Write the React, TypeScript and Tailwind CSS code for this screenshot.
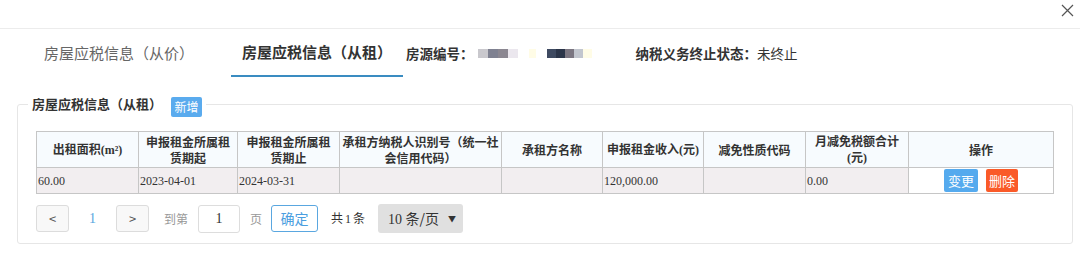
import React from 'react';

const sans = "font-['Noto_Sans_CJK_SC','Noto_Sans',sans-serif]";
const serif = "font-['Liberation_Serif','Noto_Sans_CJK_SC',serif]";

const columns = [
  { w: 102, label: <>出租面积<span className={serif}>(m²)</span></> },
  { w: 99, label: <>申报租金所属租<br />赁期起</> },
  { w: 102, label: <>申报租金所属租<br />赁期止</> },
  { w: 162, label: <>承租方纳税人识别号（统一社<br />会信用代码）</> },
  { w: 101, label: <>承租方名称</> },
  { w: 101, label: <>申报租金收入<span className={serif}>(</span>元<span className={serif}>)</span></> },
  { w: 102, label: <>减免性质代码</> },
  { w: 103, label: <>月减免税额合计<br /><span className={serif}>(</span>元<span className={serif}>)</span></> },
  { w: 145, label: <>操作</> },
];

const row = ['60.00', '2023-04-01', '2024-03-31', '', '', '120,000.00', '', '0.00'];

// blurred house id blocks
const blurA = ['#c9c8cd', '#7f8191', '#8b8791', '#ebe7ee'];
const blurB = ['#3e4a61', '#2b3549', '#7b7681', '#c2c6ce', '#fffce6'];

const CloseIcon: React.FC = () => (
  <svg width="13" height="13" viewBox="0 0 13 13" fill="none" stroke="#555" strokeWidth="1.2">
    <path d="M1 1 L12 12 M12 1 L1 12" />
  </svg>
);

const App: React.FC = () => {
  return (
    <div className={`w-[1080px] h-[270px] bg-white overflow-hidden text-[#333] ${sans}`}>
      <div className="h-[29px] border-b border-[#ececec] flex justify-end pt-[4px] pr-[6px]">
        <CloseIcon />
      </div>

      <div className="h-[48px] flex items-stretch">
        <div className="pl-[44px] flex items-center text-[15px] leading-[20px] text-[#666]">
          房屋应税信息（从价）
        </div>
        <div className="ml-[37px] w-[172px] flex items-center justify-center border-b-2 border-[#3a8cc1] text-[15px] leading-[20px] font-bold text-[#333]">
          房屋应税信息（从租）
        </div>
        <div className="ml-[3px] flex items-center text-[13.5px] leading-[18px]">
          <span className="font-bold">房源编号：</span>
          <div className="ml-[4px] flex h-[9px]">
            {blurA.map((c, i) => (
              <div key={i} className="w-[10px] h-full" style={{ backgroundColor: c }} />
            ))}
          </div>
          <div className="ml-[11px] w-[7px] h-[9px] bg-[#fffce6]" />
          <div className="ml-[11px] flex h-[9px]">
            {blurB.map((c, i) => (
              <div key={i} className="w-[9px] h-full" style={{ backgroundColor: c }} />
            ))}
          </div>
          <span className="ml-[44px] font-bold">纳税义务终止状态：</span>
          <span>未终止</span>
        </div>
      </div>

      <fieldset className="ml-[17px] mt-[14px] w-[1055px] border border-[#e6e6e6] rounded-[3px]">
        <legend className="ml-[10px] px-[4px] h-[26px] flex">
          <span className="self-center text-[13px] leading-[16px] font-bold">房屋应税信息（从租）</span>
          <span className="self-end ml-[9px] h-[20px] w-[31px] bg-[#5aabee] text-white text-[12px] leading-[20px] text-center rounded-[2px]">
            新增
          </span>
        </legend>

        <div className="px-[18px] pb-[10px]">
          <table className="mt-[14px] w-[1017px] table-fixed border-collapse text-[12px]">
            <colgroup>
              {columns.map((c, i) => (
                <col key={i} style={{ width: c.w }} />
              ))}
            </colgroup>
            <thead>
              <tr className="h-[36px] bg-[#f7fbfe]">
                {columns.map((c, i) => (
                  <th key={i} className="border border-[#c6c6c6] font-bold leading-[16px] text-center align-middle text-[#333]">
                    {c.label}
                  </th>
                ))}
              </tr>
            </thead>
            <tbody>
              <tr className="h-[26px]">
                {row.map((v, i) => (
                  <td key={i} className={`border border-[#c6c6c6] bg-[#f2eef0] pl-[1px] text-left ${serif} text-[12px] text-[#333]`}>
                    {v}
                  </td>
                ))}
                <td className="border border-[#c6c6c6] bg-white">
                  <div className="flex justify-center gap-[8px]">
                    <button className="w-[34px] h-[23px] bg-[#55aaee] text-white text-[13px] leading-[23px] rounded-[2px]">变更</button>
                    <button className="w-[32px] h-[23px] bg-[#fa5a28] text-white text-[13px] leading-[23px] rounded-[2px]">删除</button>
                  </div>
                </td>
              </tr>
            </tbody>
          </table>

          <div className="mt-[10px] flex items-center text-[12px]">
            <button className="w-[33px] h-[27px] border border-[#dcdcdc] bg-[#f8f8f8] rounded-[3px] text-[13px] text-[#555]">&lt;</button>
            <span className={`w-[47px] text-center text-[14px] text-[#5aa7e0] ${serif}`}>1</span>
            <button className="w-[33px] h-[27px] border border-[#dcdcdc] bg-[#f8f8f8] rounded-[3px] text-[13px] text-[#555]">&gt;</button>
            <span className="ml-[15px] text-[#999]">到第</span>
            <div className={`ml-[10px] w-[42px] h-[28px] border border-[#dddddd] rounded-[3px] flex items-center justify-center text-[14px] ${serif}`}>1</div>
            <span className="ml-[10px] text-[#999]">页</span>
            <button className="ml-[9px] w-[47px] h-[27px] border border-[#5aa7e0] rounded-[3px] text-[14px] text-[#4a9ee0]">确定</button>
            <span className="ml-[13px] text-[#333]">共<span className={`${serif} mx-[2px]`}>1</span>条</span>
            <div className="ml-[13px] w-[85px] h-[29px] bg-[#e0e0e0] rounded-[3px] flex items-center justify-between pl-[10px] pr-[7px] text-[14px]">
              <span><span className={serif}>10 </span>条/页</span>
              <span className="text-[8px] text-[#333]">▼</span>
            </div>
          </div>
        </div>
      </fieldset>
    </div>
  );
};

export default App;
